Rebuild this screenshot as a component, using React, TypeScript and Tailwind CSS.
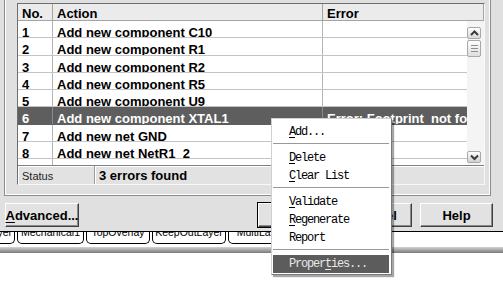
import React from "react";

const rows: [string, string, string][] = [
  ["1", "Add new component C10", ""],
  ["2", "Add new component R1", ""],
  ["3", "Add new component R2", ""],
  ["4", "Add new component R5", ""],
  ["5", "Add new component U9", ""],
  ["6", "Add new component XTAL1", "Error: Footprint  not found"],
  ["7", "Add new net GND", ""],
  ["8", "Add new net NetR1_2", ""],
  ["9", "Add new net NetU9_1", ""],
];

function Chevron({ up }: { up: boolean }) {
  return (
    <svg width="11" height="10" viewBox="0 0 11 10">
      <path
        d={up ? "M2 7 L5.5 3.5 L9 7" : "M2 3.5 L5.5 7 L9 3.5"}
        fill="none"
        stroke="#3a3a3a"
        strokeWidth="2"
      />
    </svg>
  );
}

function Btn({ children, cls }: { children?: React.ReactNode; cls: string }) {
  return (
    <div
      className={
        "h-[24px] w-[73px] flex items-center justify-center bg-[#e2e2e2] border border-t-white border-l-white border-r-[#404040] border-b-[#404040] shadow-[inset_-1px_-1px_0_#8a8a8a] text-[13px] font-bold leading-[13px] " +
        cls
      }
    >
      {children}
    </div>
  );
}

function MenuItem({ children, hi }: { children: React.ReactNode; hi?: boolean }) {
  return (
    <div
      className={
        "h-[18px] flex items-center pl-[16px] whitespace-nowrap " +
        (hi ? "bg-[#5c5c5c] text-[#e8e8e8]" : "text-black")
      }
    >
      {children}
    </div>
  );
}

function Sep() {
  return (
    <div className="h-[8px] pt-[2px]">
      <div className="h-px bg-[#9a9a9a]" />
      <div className="h-px bg-white" />
    </div>
  );
}

export default function App() {
  return (
    <div className="relative w-[503px] h-[282px] overflow-hidden bg-white font-['Liberation_Sans',Arial,sans-serif] text-black">
      <div className="h-[231px] bg-[#e0e0e0] flex flex-col">
        <div className="h-[196px] flex">
          <div className="ml-[4px] w-[487px] h-full border-l border-r border-b border-[#8c8c8c] shadow-[inset_1px_0_0_#ffffff,inset_-1px_-1px_0_#ffffff] pl-[12px] pt-[3px]">
            <div className="w-[468px] h-[182px] flex flex-col border border-t-[#6e6e6e] border-l-[#6e6e6e] border-r-[#f8f8f8] border-b-[#f8f8f8]">
              <div className="h-[17px] flex bg-[#ebebeb] border-b border-[#a4a4a4] text-[13px] font-bold leading-[13px]">
                <div className="w-[35px] pl-[4px] pt-[2.5px] border-r border-[#a4a4a4]">No.</div>
                <div className="w-[270px] pl-[4px] pt-[2.5px] border-r border-[#a4a4a4]">Action</div>
                <div className="flex-1 pl-[4px] pt-[2.5px] border-r border-[#a4a4a4]">Error</div>
              </div>
              <div className="h-[144px] flex">
                <div className="w-[449px] h-full overflow-hidden bg-white">
                  {rows.map(([n, a, e], i) => {
                    const sel = i === 5;
                    return (
                      <div
                        key={n}
                        className={
                          "h-[17.25px] flex border-b overflow-hidden text-[13px] font-bold leading-[13px] whitespace-pre " +
                          (sel ? "bg-[#5e5e5e] text-white border-[#5e5e5e]" : "border-[#c4c4c4]")
                        }
                      >
                        <div className={"w-[35px] pl-[4px] pt-[5px] border-r " + (sel ? "border-[#8a8a8a]" : "border-[#b4b4b4]")}>{n}</div>
                        <div className={"w-[270px] pl-[4px] pt-[5px] border-r " + (sel ? "border-[#8a8a8a]" : "border-[#b4b4b4]")}>{a}</div>
                        <div className="flex-1 pl-[4px] pt-[5px] overflow-hidden">{e}</div>
                      </div>
                    );
                  })}
                </div>
                <div className="w-[17px] h-full bg-[#f4f4f4] flex flex-col items-start pt-[6px]">
                  <div className="w-[14px] h-[12px] rounded-[2px] border border-[#a8a8a8] bg-gradient-to-b from-white to-[#d8d8d8] flex items-center justify-center">
                    <Chevron up />
                  </div>
                  <div className="mt-[1px] w-[14px] h-[17px] rounded-[2px] border border-[#a8a8a8] bg-gradient-to-b from-white to-[#dedede] flex flex-col items-center justify-center gap-[2px]">
                    <div className="w-[7px] h-px bg-[#8e8e8e]" />
                    <div className="w-[7px] h-px bg-[#8e8e8e]" />
                    <div className="w-[7px] h-px bg-[#8e8e8e]" />
                  </div>
                  <div className="flex-1" />
                  <div className="w-[14px] h-[12px] mb-[2px] rounded-[2px] border border-[#a8a8a8] bg-gradient-to-b from-white to-[#d0d0d0] flex items-center justify-center">
                    <Chevron up={false} />
                  </div>
                </div>
              </div>
              <div className="h-[19px] flex bg-[#e2e2e2] border-t border-[#808080]">
                <div className="w-[77px] pl-[4px] pt-[4px] border-r border-[#9a9a9a] shadow-[inset_1px_1px_0_#ffffff] text-[11px] leading-[12px] text-[#222]">
                  Status
                </div>
                <div className="flex-1 pl-[4px] pt-[3px] text-[13px] font-bold leading-[13px] shadow-[inset_1px_1px_0_#ffffff]">
                  3 errors found
                </div>
              </div>
            </div>
          </div>
        </div>
        <div className="h-[35px] flex items-start pt-[7px]">
          <Btn cls="ml-[5px] w-[74px]">
            <span>
              <u className="underline-offset-2">A</u>dvanced...
            </span>
          </Btn>
          <div className="ml-[179px] outline outline-1 outline-black">
            <Btn cls="">OK</Btn>
          </div>
          <Btn cls="ml-[8px]">Cancel</Btn>
          <Btn cls="ml-[8px]">Help</Btn>
        </div>
      </div>
      <div className="h-[16px] border-t border-black bg-white flex items-start overflow-hidden text-[10.5px] leading-[11px]">
        <div className="w-[15px] h-[12px] flex justify-end overflow-hidden border-r border-b border-black rounded-br-[5px] pr-[2px]">
          <span className="mt-[-5px] whitespace-nowrap">BottomLayer</span>
        </div>
        {[
          ["Mechanical1", "ml-[2px] w-[67px]"],
          ["TopOverlay", "ml-[2px] w-[64px]"],
          ["KeepOutLayer", "ml-[2px] w-[74px]"],
          ["MultiLayer", "ml-[2px] w-[66px]"],
        ].map(([t, c]) => (
          <div
            key={t}
            className={
              "h-[12px] flex justify-center overflow-hidden border-l border-r border-b border-black rounded-b-[5px] " + c
            }
          >
            <span className="mt-[-5px] whitespace-nowrap">{t}</span>
          </div>
        ))}
      </div>
      <div className="h-[6px] bg-gradient-to-b from-[#d4d4d4] to-[#7a7a7a]" />

      <div className="absolute left-[271px] top-[118px] w-[121px] h-[157px] bg-white border border-t-[#d0d0d0] border-l-[#d0d0d0] border-r-[#7a7a7a] border-b-[#7a7a7a] shadow-[2px_2px_1px_rgba(0,0,0,0.35)] pt-[4px] pb-[1px] pl-[1px] pr-[2px] font-['Liberation_Mono',monospace] text-[12px] tracking-[-1.2px] leading-[12px]">
        <MenuItem>
          <span>
            <u className="underline-offset-2">A</u>dd...
          </span>
        </MenuItem>
        <Sep />
        <MenuItem>
          <span>
            <u className="underline-offset-2">D</u>elete
          </span>
        </MenuItem>
        <MenuItem>
          <span>
            <u className="underline-offset-2">C</u>lear List
          </span>
        </MenuItem>
        <Sep />
        <MenuItem>
          <span>
            <u className="underline-offset-2">V</u>alidate
          </span>
        </MenuItem>
        <MenuItem>
          <span>
            <u className="underline-offset-2">R</u>egenerate
          </span>
        </MenuItem>
        <MenuItem>
          <span>Report</span>
        </MenuItem>
        <Sep />
        <MenuItem hi>
          <span>
            Proper<u className="underline-offset-2">t</u>ies...
          </span>
        </MenuItem>
      </div>
    </div>
  );
}
